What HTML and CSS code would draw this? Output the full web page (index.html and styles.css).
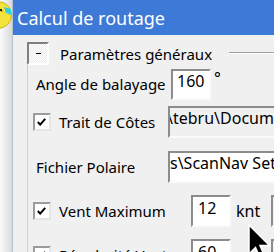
FILE: index.html
```html
<!DOCTYPE html>
<html>
<head>
<meta charset="utf-8">
<link rel="stylesheet" href="styles.css">
</head>
<body>
<div class="desk">
  <div class="shade">
    <svg class="appicon" width="12" height="32" viewBox="0 0 12 32">
      <circle cx="-2" cy="15" r="13.5" fill="#f3e33a" stroke="#c9b312" stroke-width="1"/>
      <polygon points="4,7 11,9 11,15 6,13" fill="#2fd0e0"/>
      <rect x="0" y="9" width="2" height="2" fill="#222"/>
      <rect x="1" y="11" width="2" height="1" fill="#e08020"/>
    </svg>
  </div>
  <div class="window">
    <div class="titlebar">Calcul de routage</div>
    <div class="client">
      <div class="grouphead">
        <span class="toggle"><span class="dash"></span></span>
        <span class="gtitle">Paramètres généraux</span>
        <span class="rule"></span>
      </div>
      <div class="group">
        <div class="row r1">
          <div class="cell"><span class="lbl">Angle de balayage</span></div>
          <span class="field f-angle">160</span><span class="deg">°</span>
        </div>
        <div class="row r2">
          <div class="cell"><span class="chk"><svg width="9" height="8" viewBox="0 0 9 8"><polyline points="0.8,4 3.2,6.6 8.2,0.8" fill="none" stroke="#000" stroke-width="2"/></svg></span><span class="ctext">Trait de Côtes</span></div>
          <span class="field f-path f-ro"><span class="scroll1">\tebru\Documents\ScanNav</span></span>
        </div>
        <div class="row r3">
          <div class="cell"><span class="lbl">Fichier Polaire</span></div>
          <span class="field f-path">s\ScanNav Settings</span>
        </div>
        <div class="row r4">
          <div class="cell"><span class="chk"><svg width="9" height="8" viewBox="0 0 9 8"><polyline points="0.8,4 3.2,6.6 8.2,0.8" fill="none" stroke="#000" stroke-width="2"/></svg></span><span class="ctext">Vent Maximum</span></div>
          <span class="field f-small">12</span><span class="unit">knt</span><span class="field f-edge"></span>
        </div>
        <div class="row r5">
          <div class="cell"><span class="chk"><svg width="9" height="8" viewBox="0 0 9 8"><polyline points="0.8,4 3.2,6.6 8.2,0.8" fill="none" stroke="#000" stroke-width="2"/></svg></span><span class="ctext">Régularité Vent</span></div>
          <span class="field f-small">60</span><span class="unit"></span><span class="field f-edge"></span>
        </div>
      </div>
    </div>
  </div>
</div>
<svg class="cursor" width="26" height="40" viewBox="0 0 26 40">
  <path d="M1,1 L1,30 L7.5,23.5 L12.5,35 L17,33 L12,21.5 L21.5,21.5 Z" fill="#000" stroke="#fff" stroke-width="1.5" stroke-linejoin="miter"/>
</svg>
</body>
</html>
```
FILE: styles.css
```css
html, body {
  margin: 0;
  padding: 0;
}
body {
  width: 274px;
  height: 252px;
  overflow: hidden;
  position: relative;
  background: #f0f0f0;
  font-family: "Noto Sans", "Open Sans", sans-serif;
  color: #000;
}
.desk {
  display: flex;
  height: 252px;
}
.shade {
  width: 12px;
  flex: none;
  background: linear-gradient(to right, #fbfbfb, #d9d9d9);
}
.appicon {
  display: block;
}
.window {
  flex: 1;
  min-width: 0;
  overflow: hidden;
  border-left: 1px solid #b6c1d2;
  background: #f0f0f0;
  display: flex;
  flex-direction: column;
}
.titlebar {
  height: 35px;
  box-sizing: border-box;
  padding: 2px 0 0 4px;
  line-height: 33px;
  background: #3d79d6;
  color: #fff;
  font-size: 18px;
  white-space: nowrap;
}
.client {
  padding-left: 14px;
}
.grouphead {
  display: flex;
  align-items: center;
  margin-top: 7px;
  height: 23px;
  white-space: nowrap;
}
.toggle {
  width: 22px;
  height: 23px;
  flex: none;
  box-sizing: border-box;
  border: 2px solid;
  border-color: #7f7f7f #fdfdfd #fdfdfd #7f7f7f;
  background: repeating-conic-gradient(#ffffff 0 25%, #ebebeb 0 50%) 0 0 / 2px 2px;
  display: flex;
  align-items: center;
  justify-content: center;
}
.dash {
  width: 5px;
  height: 1px;
  background: #000;
  margin-left: 1px;
}
.gtitle {
  margin-left: 11px;
  width: 169px;
  flex: none;
  font-size: 15px;
}
.rule {
  flex: 1;
  align-self: flex-start;
  margin-top: 10px;
  border-top: 1px solid #a0a0a0;
  border-bottom: 1px solid #ffffff;
}
.group {
  border-left: 1px solid #cfcfcf;
  padding-top: 3px;
  padding-bottom: 20px;
}
.row {
  display: flex;
  align-items: center;
  height: 32px;
  white-space: nowrap;
}
.r2 { margin-top: 6px; }
.r3 { margin-top: 13px; }
.r4 { margin-top: 12px; }
.r5 { margin-top: 12px; }
.cell {
  width: 140px;
  flex: none;
  display: flex;
  align-items: center;
  font-size: 15px;
}
.lbl {
  margin-left: 8px;
}
.chk {
  margin-left: 5px;
  width: 18px;
  height: 18px;
  flex: none;
  box-sizing: border-box;
  border: 2px solid;
  border-color: #9c9c9c #e6e6e6 #e6e6e6 #9c9c9c;
  background: #fff;
  display: flex;
  align-items: center;
  justify-content: center;
}
.chk svg {
  display: block;
  margin-left: -2px;
  margin-top: -1px;
}
.ctext {
  margin-left: 8px;
}
.field {
  height: 32px;
  box-sizing: border-box;
  border: 2px solid;
  border-color: #8c8c8c #fafafa #fafafa #8c8c8c;
  background: #fff;
  font-size: 16px;
  line-height: 20px;
  overflow: hidden;
  white-space: nowrap;
  flex: none;
}
.f-angle {
  margin-left: 3px;
  width: 40px;
  height: 31px;
  padding-left: 4px;
}
.deg {
  margin-left: 3px;
  align-self: flex-start;
  font-size: 16px;
  line-height: 20px;
  margin-top: 0;
}
.f-path {
  width: 130px;
  padding-left: 0;
}
.f-ro {
  background: #f0f0f0;
}
.scroll1 {
  display: inline-block;
  margin-left: -3px;
}
.f-small {
  margin-left: 23px;
  width: 40px;
  padding-left: 5px;
  line-height: 22px;
}
.unit {
  margin-left: 5px;
  width: 30px;
  font-size: 16px;
  flex: none;
}
.f-edge {
  margin-left: 5px;
  width: 20px;
  background: #f0f0f0;
}
.cursor {
  position: absolute;
  left: 248px;
  top: 224px;
}
```
